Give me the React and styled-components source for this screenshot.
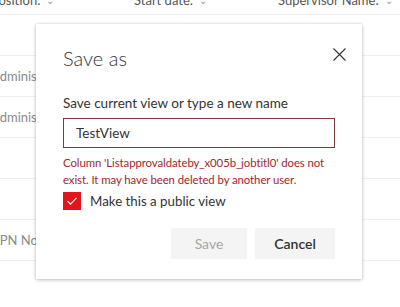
import React from "react";
import styled, { createGlobalStyle } from "styled-components";

const FONT = `"Lato", "Open Sans", "Liberation Sans", sans-serif`;

const Global = createGlobalStyle`
  html, body { margin: 0; padding: 0; background: #fff; }
  body { font-family: ${FONT}; }
  * { box-sizing: border-box; }
`;

const Page = styled.div`
  position: relative;
  width: 400px;
  height: 307px;
  overflow: hidden;
  background: #fff;
`;

const List = styled.div`
  margin-top: -14px;
  margin-left: -9px;
  width: 420px;
`;

const Row = styled.div`
  display: grid;
  grid-template-columns: 143px 144px 1fr;
  align-items: center;
  height: ${(p) => (p.$header ? 29 : 41)}px;
  border-bottom: 1px solid #efefef;
  font-size: 13px;
  color: ${(p) => (p.$header ? "#555" : "#8a8a8a")};
`;

const Cell = styled.div`
  display: flex;
  align-items: center;
  gap: 6px;
  white-space: nowrap;
  overflow: hidden;
`;

const Chevron = styled.span`
  font-size: 10px;
  color: #999;
`;

const Dialog = styled.div`
  position: absolute;
  left: 36px;
  top: 24px;
  width: 326px;
  height: 255px;
  background: #fff;
  box-shadow: 0 1px 4px rgba(0, 0, 0, 0.22), 0 0 2px rgba(0, 0, 0, 0.12);
  padding: 20px 27px 0 27px;
  display: flex;
  flex-direction: column;
`;

const Title = styled.h2`
  margin: 0;
  font-family: ${FONT};
  font-weight: 300;
  font-size: 20px;
  line-height: 28px;
  color: #333;
`;

const Close = styled.button`
  position: absolute;
  top: 20px;
  right: 13px;
  width: 20px;
  height: 20px;
  padding: 0;
  border: 0;
  background: transparent;
  display: flex;
  align-items: center;
  justify-content: center;
`;

const Label = styled.label`
  margin-top: 21px;
  font-size: 13.5px;
  line-height: 20px;
  color: #333;
`;

const Input = styled.div`
  margin-top: 5px;
  height: 30px;
  border: 1px solid #7a3b3b;
  display: flex;
  align-items: center;
  padding: 0 12px;
  font-size: 13.5px;
  color: #333;
`;

const Error = styled.div`
  margin-top: 6px;
  font-size: 11.4px;
  line-height: 17px;
  letter-spacing: -0.08px;
  color: #a4262c;
`;

const CheckRow = styled.div`
  margin-top: 4px;
  display: flex;
  align-items: center;
  gap: 9px;
  font-size: 13.3px;
  color: #333;
`;

const Box = styled.span`
  width: 18px;
  height: 18px;
  background: #e3151a;
  display: flex;
  align-items: center;
  justify-content: center;
`;

const Footer = styled.div`
  margin-top: 18px;
  display: flex;
  justify-content: flex-end;
  gap: 8px;
`;

const Button = styled.button`
  height: 31px;
  width: ${(p) => p.$w}px;
  border: 0;
  background: #f4f4f4;
  font-family: ${FONT};
  font-size: 14px;
  font-weight: ${(p) => (p.$disabled ? 400 : 600)};
  color: ${(p) => (p.$disabled ? "#a6a6a6" : "#333")};
  padding: 0;
`;

export default function App() {
  return (
    <Page>
      <Global />
      <List>
        <Row $header>
          <Cell>Position: <Chevron>⌄</Chevron></Cell>
          <Cell>Start date: <Chevron>⌄</Chevron></Cell>
          <Cell>Supervisor Name: <Chevron>⌄</Chevron></Cell>
        </Row>
        <Row><Cell /><Cell /><Cell /></Row>
        <Row><Cell>Administrator</Cell><Cell /><Cell /></Row>
        <Row><Cell>Administrator</Cell><Cell /><Cell /></Row>
        <Row><Cell /><Cell /><Cell /></Row>
        <Row><Cell /><Cell /><Cell /></Row>
        <Row><Cell>VPN Non-Admin</Cell><Cell /><Cell /></Row>
      </List>
      <Dialog>
        <Title>Save as</Title>
        <Close aria-label="Close">
          <svg width="13" height="13" viewBox="0 0 13 13">
            <path d="M0.5 0.5 L12.5 12.5 M12.5 0.5 L0.5 12.5" stroke="#333" strokeWidth="1.1" fill="none" />
          </svg>
        </Close>
        <Label>Save current view or type a new name</Label>
        <Input>TestView</Input>
        <Error>
          Column 'Listapprovaldateby_x005b_jobtitl0' does not exist. It may have been deleted by another user.
        </Error>
        <CheckRow>
          <Box>
            <svg width="12" height="12" viewBox="0 0 12 12">
              <path d="M1.5 6.2 L4.5 9.2 L10.5 2.8" stroke="#fff" strokeWidth="1.2" fill="none" />
            </svg>
          </Box>
          Make this a public view
        </CheckRow>
        <Footer>
          <Button $w={76} $disabled>Save</Button>
          <Button $w={80}>Cancel</Button>
        </Footer>
      </Dialog>
    </Page>
  );
}
